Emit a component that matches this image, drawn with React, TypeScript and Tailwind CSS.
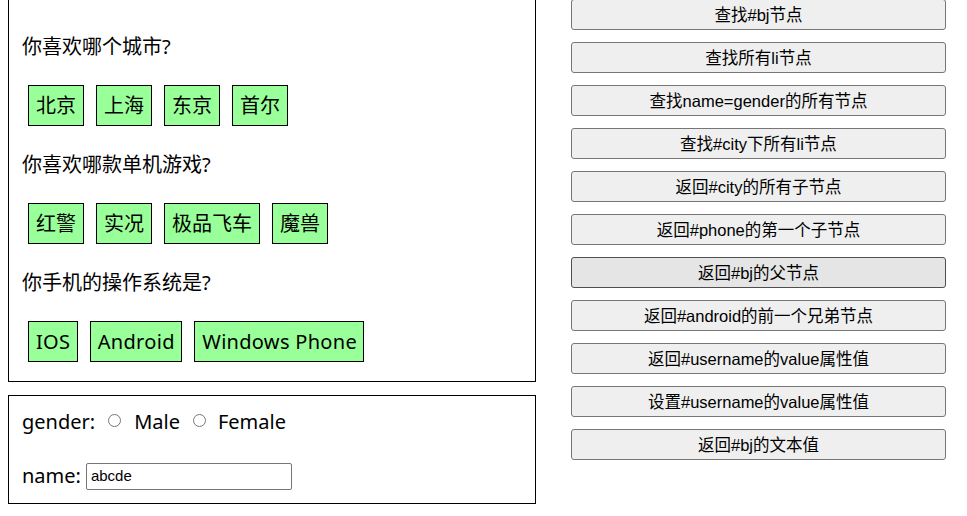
import { useState } from 'react';

const questions = [
  { title: '你喜欢哪个城市?', items: ['北京', '上海', '东京', '首尔'] },
  { title: '你喜欢哪款单机游戏?', items: ['红警', '实况', '极品飞车', '魔兽'] },
  { title: '你手机的操作系统是?', items: ['IOS', 'Android', 'Windows Phone'] },
];

const actions = [
  '查找#bj节点',
  '查找所有li节点',
  '查找name=gender的所有节点',
  '查找#city下所有li节点',
  '返回#city的所有子节点',
  '返回#phone的第一个子节点',
  '返回#bj的父节点',
  '返回#android的前一个兄弟节点',
  '返回#username的value属性值',
  '设置#username的value属性值',
  '返回#bj的文本值',
];

const leftFont = "font-['Noto_Sans','Noto_Sans_CJK_SC',sans-serif]";

export default function App() {
  const [name, setName] = useState('abcde');

  return (
    <div className="flex items-start bg-white text-black min-h-screen font-['Liberation_Sans','Noto_Sans_CJK_SC',sans-serif]">
      {/* Left column */}
      <div className={`ml-[8px] w-[528px] flex flex-col ${leftFont}`}>
        <div className="border border-t-0 border-black pl-[13px] pt-[33px] pb-[19px] flex flex-col">
          {questions.map((q, i) => (
            <div key={q.title} className={i > 0 ? 'mt-[25px]' : ''}>
              <div className="text-[20px] leading-[28px] h-[28px]">{q.title}</div>
              <ul className="mt-[24px] ml-[6px] flex gap-[12px]">
                {q.items.map((item) => (
                  <li
                    key={item}
                    className={
                      /[a-z]/i.test(item)
                        ? 'h-[41px] pl-[7px] pr-[6.5px] border border-black bg-[#99ff99] text-[20px] leading-[39px] whitespace-nowrap tracking-[0.3px]'
                        : 'h-[41px] px-[7px] border border-black bg-[#99ff99] text-[20px] leading-[39px] whitespace-nowrap'
                    }
                  >
                    {item}
                  </li>
                ))}
              </ul>
            </div>
          ))}
        </div>

        <div className="mt-[13px] h-[109px] border border-black pl-[13px] pt-[12px] flex flex-col">
          <div className="flex items-center h-[28px] text-[20px] leading-[28px]">
            <span>gender:</span>
            <input type="radio" name="gender" className="ml-[13px] w-[13px] h-[13px] mt-[-4px]" />
            <span className="ml-[13px]">Male</span>
            <input type="radio" name="gender" className="ml-[13px] w-[13px] h-[13px] mt-[-4px]" />
            <span className="ml-[12px]">Female</span>
          </div>
          <div className="flex items-center mt-[26px] text-[20px] leading-[28px]">
            <span>name:</span>
            <input
              value={name}
              onChange={(e) => setName(e.target.value)}
              className="ml-[5px] w-[206px] h-[27px] border border-[#767676] rounded-[2px] px-[4px] text-[15px] font-['Liberation_Sans',sans-serif] outline-none"
            />
          </div>
        </div>
      </div>

      {/* Right column */}
      <div className="ml-[35px] w-[375px] -mt-px flex flex-col gap-[12px]">
        {actions.map((a, i) => (
          <button
            key={a}
            className={
              i === 6
                ? 'h-[31px] pt-[1px] border border-[#4f4f4f] rounded-[3px] bg-[#e5e5e5] text-[16.5px] leading-[28px]'
                : 'h-[31px] pt-[1px] border border-[#767676] rounded-[3px] bg-[#efefef] text-[16.5px] leading-[28px]'
            }
          >
            {a}
          </button>
        ))}
      </div>
    </div>
  );
}
